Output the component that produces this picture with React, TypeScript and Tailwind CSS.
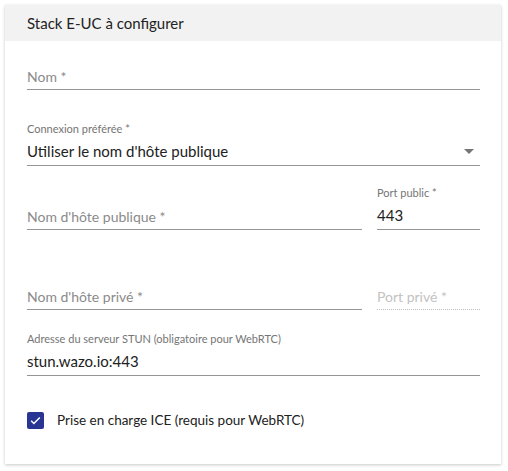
const font = { fontFamily: "'Lato', 'Open Sans', sans-serif" };

function Field({ label, value, placeholder, disabled, className = "" }: { label?: string; value?: string; placeholder?: string; disabled?: boolean; className?: string }) {
  return (
    <div className={`flex flex-col ${className}`}>
      <div className="h-4 text-[11px] leading-4 text-[#757575]">{label}</div>
      <div
        className={`flex h-[29px] items-center border-b ${
          disabled ? "border-dotted border-[#bdbdbd]" : "border-[#949494]"
        }`}
      >
        {value ? (
          <span className="text-[15px] text-[#212121]">{value}</span>
        ) : (
          <span className={`pt-[3px] text-[14px] ${disabled ? "text-[#c2c2c2]" : "text-[#8a8a8a]"}`}>{placeholder}</span>
        )}
      </div>
    </div>
  );
}

export default function App() {
  return (
    <div className="h-[471px] w-[508px] bg-white pl-[5px] pt-[5px]" style={font}>
      <div className="flex h-[459px] w-[496px] flex-col bg-white shadow-[0_1px_3px_rgba(0,0,0,0.22)]">
        <div className="flex h-9 items-center bg-[#f2f2f2] px-[22px] text-[15px] text-[#222]">
          Stack E-UC à configurer
        </div>
        <div className="flex flex-col pl-[22px] pr-[21px]">
          <Field placeholder="Nom *" className="mt-[4px]" />
          <div className="mt-[31px] flex flex-col">
            <div className="h-4 text-[11px] leading-4 text-[#757575]">Connexion préférée *</div>
            <div className="flex h-[29px] items-center justify-between border-b border-[#949494]">
              <span className="text-[15px] text-[#212121]">Utiliser le nom d'hôte publique</span>
              <svg width="10" height="5" viewBox="0 0 10 5" className="mr-[6px]">
                <path d="M0 0h10L5 5z" fill="#757575" />
              </svg>
            </div>
          </div>
          <div className="mt-[19px] flex gap-[15px]">
            <Field placeholder="Nom d'hôte publique *" className="flex-1" />
            <Field label="Port public *" value="443" className="w-[103px]" />
          </div>
          <div className="mt-[35px] flex gap-[15px]">
            <Field placeholder="Nom d'hôte privé *" className="flex-1" />
            <Field placeholder="Port privé *" disabled className="w-[103px]" />
          </div>
          <Field
            label="Adresse du serveur STUN (obligatoire pour WebRTC)"
            value="stun.wazo.io:443"
            className="mt-[21px]"
          />
          <label className="mt-[34px] flex items-center gap-[13px]">
            <span className="flex h-[17px] w-[17px] items-center justify-center rounded-[2px] bg-[#283593]">
              <svg width="13" height="13" viewBox="0 0 24 24">
                <path d="M4 12.5l5 5L20 6.5" fill="none" stroke="white" strokeWidth="2.8" />
              </svg>
            </span>
            <span className="text-[13.5px] text-[#212121]">Prise en charge ICE (requis pour WebRTC)</span>
          </label>
        </div>
      </div>
    </div>
  );
}
